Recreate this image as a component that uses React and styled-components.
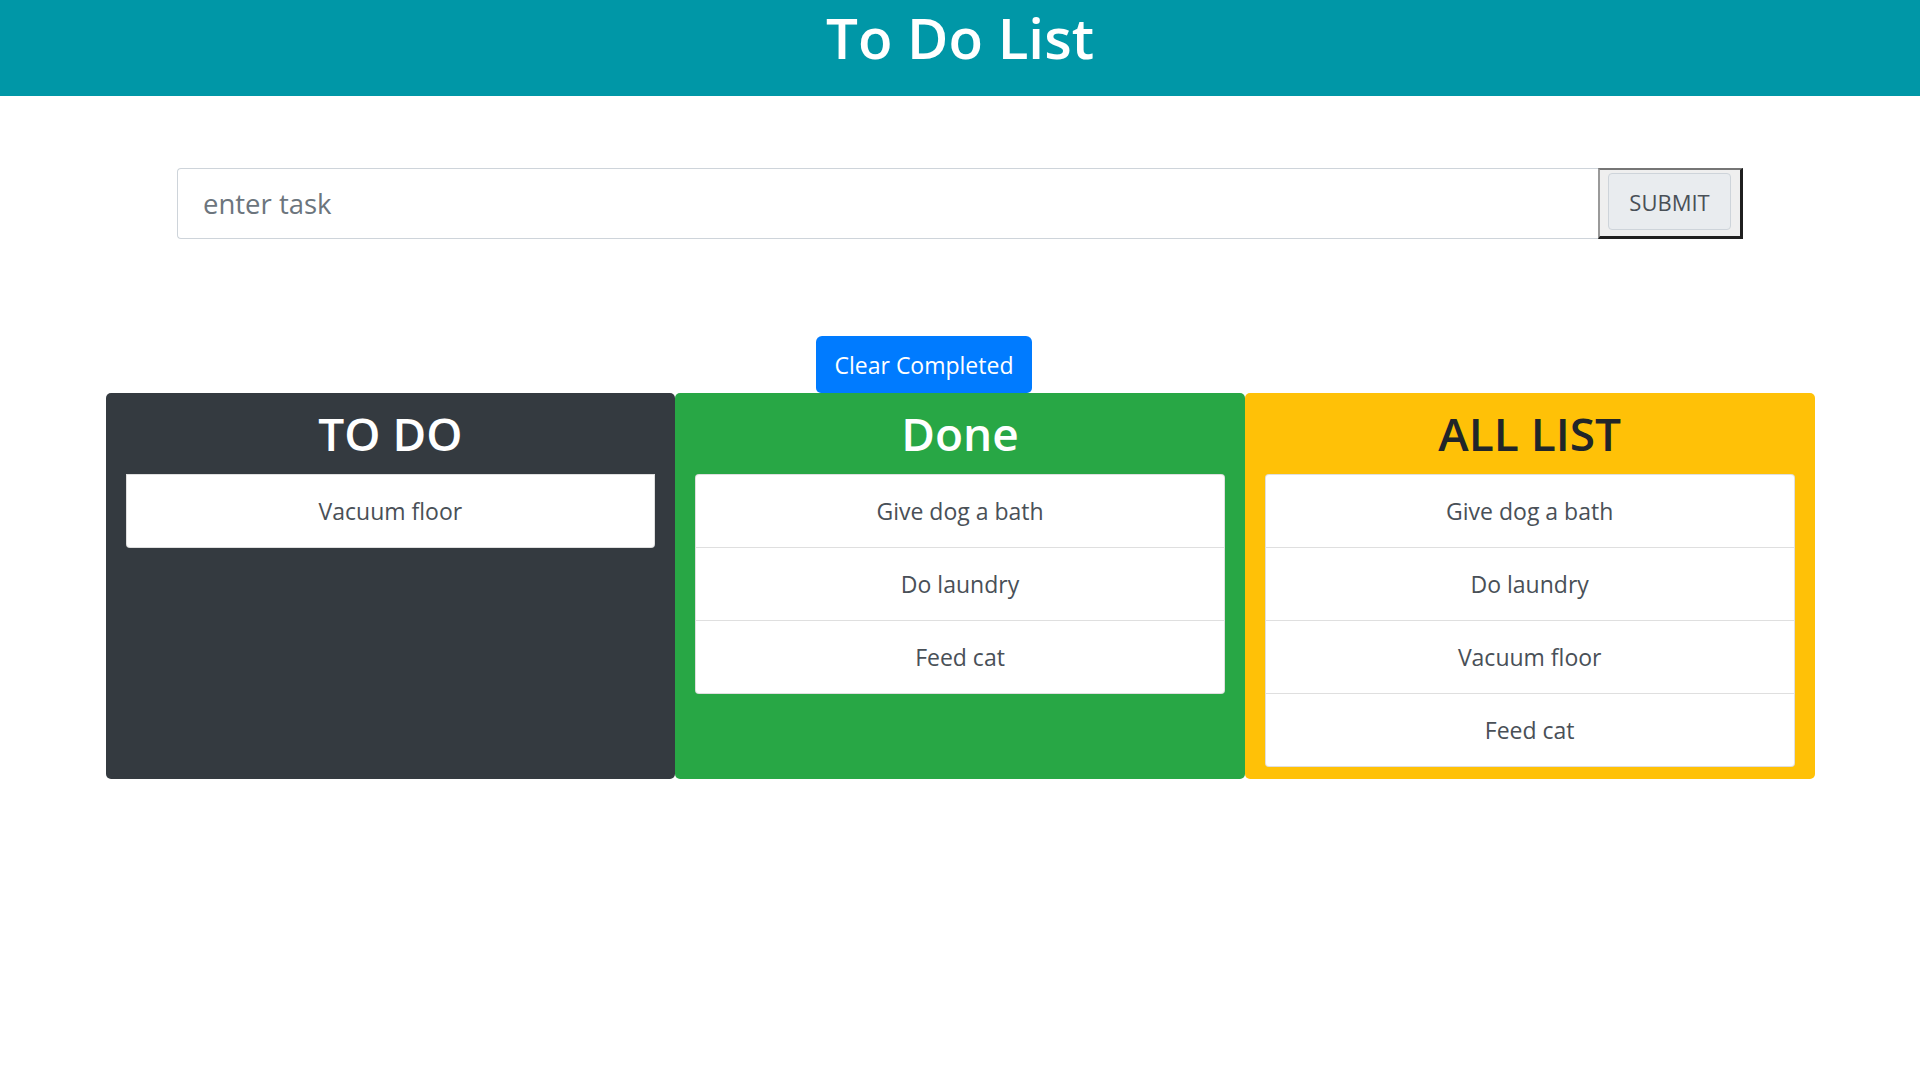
import styled, { createGlobalStyle } from "styled-components";

const GlobalStyle = createGlobalStyle`
  body {
    margin: 0;
    background: #fff;
    font-family: "Open Sans", "Noto Sans", sans-serif;
  }
`;

const Header = styled.header`
  height: 96px;
  background: #0097a7;
  display: flex;
  justify-content: center;
  align-items: center;
  padding-bottom: 20px;
  box-sizing: border-box;
  h1 {
    margin: 0;
    color: #fff;
    font-size: 56.5px;
    font-weight: 600;
    line-height: 1;
  }
`;

const InputGroup = styled.form`
  display: flex;
  width: 1566px;
  height: 71px;
  margin: 72px auto 0;
`;

const TaskInput = styled.input`
  flex: 1;
  min-width: 0;
  box-sizing: border-box;
  border: 1px solid #ced4da;
  border-right: 0;
  border-radius: 4px 0 0 4px;
  padding: 0 25px;
  font-family: inherit;
  font-size: 27.5px;
  color: #495057;
  outline: none;
  &::placeholder {
    color: #6c757d;
  }
`;

const SubmitButton = styled.button`
  width: 145px;
  box-sizing: border-box;
  background: #efefef;
  border-style: solid;
  border-width: 2px 3px 3px 2px;
  border-color: #767676 #1f1f1f #1f1f1f #9a9a9a;
  padding: 3px 9px 6px 8px;
  display: flex;
  cursor: pointer;
`;

const SubmitLabel = styled.span`
  flex: 1;
  display: flex;
  align-items: center;
  justify-content: center;
  background: #e9ecef;
  border: 1px solid #ced4da;
  border-radius: 4px;
  color: #495057;
  font-family: "Open Sans", sans-serif;
  font-size: 22px;
`;

const Toolbar = styled.div`
  width: 1708px;
  margin: 97px auto 0;
  display: flex;
`;

const ClearButton = styled.button`
  margin-left: 710px;
  width: 216px;
  height: 57px;
  border: 0;
  border-radius: 6px 6px 5px 5px;
  background: #007bff;
  color: #fff;
  font-family: inherit;
  font-size: 23px;
  cursor: pointer;
`;

const Board = styled.div`
  width: 1709px;
  margin: 0 auto;
  display: flex;
`;

const Column = styled.section`
  flex: 1;
  padding: 0 20px 12px;
  border-radius: 5px;
  background: ${(p) => p.$bg};
  color: ${(p) => p.$fg};
`;

const ColumnTitle = styled.h2`
  margin: 0;
  height: 81px;
  line-height: 81px;
  text-align: center;
  font-size: 46px;
  font-weight: 600;
`;

const List = styled.ul`
  list-style: none;
  margin: 0;
  padding: 0;
`;

const Item = styled.li`
  background: #fff;
  border: 1px solid rgba(0, 0, 0, 0.125);
  border-top-width: 0;
  padding: 18px;
  line-height: 36px;
  text-align: center;
  font-size: 23px;
  color: #495057;
  &:first-child {
    border-top-width: 1px;
    border-radius: 4px 4px 0 0;
  }
  &:last-child {
    border-radius: 0 0 4px 4px;
  }
`;

const columns = [
  { title: "TO DO", bg: "#343a40", fg: "#fff", items: ["Vacuum floor"] },
  { title: "Done", bg: "#28a745", fg: "#fff", items: ["Give dog a bath", "Do laundry", "Feed cat"] },
  {
    title: "ALL LIST",
    bg: "#ffc107",
    fg: "#212529",
    items: ["Give dog a bath", "Do laundry", "Vacuum floor", "Feed cat"],
  },
];

export default function App() {
  return (
    <>
      <GlobalStyle />
      <Header>
        <h1>To Do List</h1>
      </Header>
      <InputGroup onSubmit={(e) => e.preventDefault()}>
        <TaskInput placeholder="enter task" />
        <SubmitButton type="submit">
          <SubmitLabel>SUBMIT</SubmitLabel>
        </SubmitButton>
      </InputGroup>
      <Toolbar>
        <ClearButton>Clear Completed</ClearButton>
      </Toolbar>
      <Board>
        {columns.map((col) => (
          <Column key={col.title} $bg={col.bg} $fg={col.fg}>
            <ColumnTitle>{col.title}</ColumnTitle>
            <List>
              {col.items.map((item) => (
                <Item key={item}>{item}</Item>
              ))}
            </List>
          </Column>
        ))}
      </Board>
    </>
  );
}
